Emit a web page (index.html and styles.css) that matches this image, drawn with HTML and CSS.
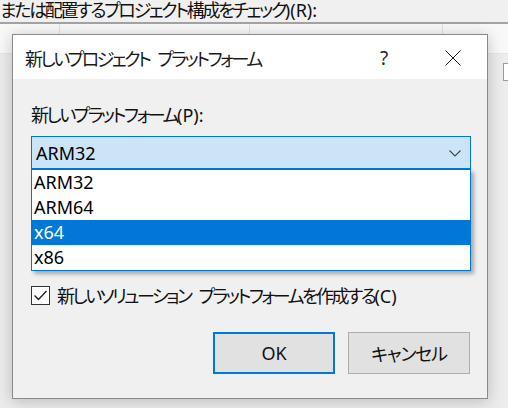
FILE: index.html
```html
<!DOCTYPE html>
<html lang="ja">
<head>
<meta charset="utf-8">
<link rel="stylesheet" href="styles.css">
<title>新しいプロジェクト プラットフォーム</title>
</head>
<body>
<div class="desktop">
  <div class="topstrip"><span class="toptext jp">または配置するプロジェクト構成をチェック<span class="lat">)(R):</span></span></div>
  <div class="gridrow">
    <div class="gcell c1"></div>
    <div class="gcell c2"></div>
    <div class="gcell c3"></div>
    <div class="gcell c4"></div>
  </div>
  <div class="bgrow"><span class="bgcheck"></span></div>
</div>

<div class="dialog">
  <div class="titlebar">
    <span class="title jp">新しいプロジェクト プラットフォーム</span>
    <span class="help">?</span>
    <svg class="close" width="16" height="16" viewBox="0 0 16 16"><path d="M0.5 0.5 L15.5 15.5 M15.5 0.5 L0.5 15.5" stroke="#1a1a1a" stroke-width="1" fill="none"/></svg>
  </div>
  <div class="body">
    <div class="label"><span class="jp">新しいプラットフォーム</span>(P):</div>
    <div class="combowrap">
      <div class="combo">
        <span class="combotext">ARM32</span>
        <svg class="chev" width="12" height="7" viewBox="0 0 12 7"><path d="M0.5 0.5 L6 6 L11.5 0.5" stroke="#444" stroke-width="1.1" fill="none"/></svg>
      </div>
      <ul class="list">
        <li class="item">ARM32</li>
        <li class="item">ARM64</li>
        <li class="item sel">x64</li>
        <li class="item">x86</li>
      </ul>
    </div>
    <label class="checkrow">
      <span class="box"><svg width="17" height="17" viewBox="0 0 17 17"><path d="M2.5 8.5 L6.5 12.5 L14.5 4" stroke="#222" stroke-width="1.4" fill="none"/></svg></span>
      <span class="checktext"><span class="jp">新しいソリューション プラットフォームを作成する</span>(C)</span>
    </label>
    <div class="buttons">
      <button class="btn ok">OK</button>
      <button class="btn cancel">キャンセル</button>
    </div>
  </div>
</div>
</body>
</html>
```

FILE: styles.css
```css
* { box-sizing: border-box; }
html, body { margin: 0; padding: 0; }
body {
  width: 508px;
  height: 408px;
  overflow: hidden;
  background: #ececec;
  font-family: "Noto Sans", "Noto Sans CJK JP", sans-serif;
  font-feature-settings: "palt";
  color: #000;
  position: relative;
}
.jp { letter-spacing: -2.5px; word-spacing: 6px; }
.lat { letter-spacing: 0; }
.desktop { display: flex; flex-direction: column; }
.topstrip {
  height: 24px;
  background: #f0f0f0;
  border-bottom: 2px solid #a3a3a3;
  white-space: nowrap;
}
.toptext {
  display: block;
  font-size: 18px;
  line-height: 20px;
  margin-left: 0;
  color: #111;
  letter-spacing: -2.3px;
}
.gridrow {
  height: 30px;
  display: flex;
  background: #f8f8f8;
  border-bottom: 1px solid #e6e6e6;
}
.gcell { border-right: 1px solid #e2e2e2; height: 100%; }
.c1 { width: 60px; }
.c2 { width: 190px; }
.c3 { width: 193px; }
.c4 { flex: 1; border-right: none; }
.bgrow {
  height: 36px;
  display: flex;
  justify-content: flex-end;
  align-items: center;
}
.bgcheck {
  width: 18px;
  height: 18px;
  border: 1px solid #9a9a9a;
  background: #fff;
  margin-right: -13px;
}

.dialog {
  position: absolute;
  left: 12px;
  top: 34px;
  width: 476px;
  height: 365px;
  border: 1px solid #8a8a8a;
  background: #f0f0f0;
  box-shadow: 0 2px 14px rgba(0,0,0,0.22);
  display: flex;
  flex-direction: column;
}
.titlebar {
  height: 44px;
  background: #fff;
  display: flex;
  align-items: center;
  padding-left: 12px;
  flex: none;
}
.title {
  font-size: 18px;
  color: #1a1a1a;
  flex: 1;
  margin-top: 2px;
}
.help {
  font-size: 19px;
  color: #222;
  width: 20px;
  margin-right: 45px;
  margin-top: 1px;
  font-family: "Noto Sans", sans-serif;
}
.close { margin-right: 26px; margin-top: 2px; }

.body {
  display: flex;
  flex-direction: column;
  padding: 25px 16px 0 18px;
}
.label {
  font-size: 18px;
  line-height: 22px;
  color: #111;
}
.combowrap {
  position: relative;
  margin-top: 10px;
  width: 440px;
}
.combo {
  height: 33px;
  border: 1px solid #0078d7;
  background: #cce4f7;
  display: flex;
  align-items: center;
  padding-left: 4px;
}
.combotext { font-size: 18px; flex: 1; color: #000; }
.chev { margin-right: 9px; margin-top: 1px; }
.list {
  position: absolute;
  left: 0;
  top: 33px;
  width: 440px;
  margin: 0;
  padding: 0;
  list-style: none;
  background: #fff;
  border: 1px solid #0078d7;
  box-shadow: 3px 3px 4px rgba(0,0,0,0.3);
}
.item {
  height: 25px;
  line-height: 25px;
  font-size: 18px;
  padding-left: 2px;
  color: #000;
}
.item.sel { background: #0078d7; color: #fff; }

.checkrow {
  display: flex;
  align-items: center;
  margin-top: 116px;
  height: 20px;
}
.box {
  width: 19px;
  height: 19px;
  border: 1px solid #333;
  background: #fff;
  display: flex;
  align-items: center;
  justify-content: center;
}
.checktext {
  font-size: 18px;
  margin-left: 7px;
  color: #111;
}
.buttons {
  display: flex;
  justify-content: flex-end;
  gap: 13px;
  margin-top: 27px;
  margin-right: 1px;
}
.btn {
  width: 122px;
  height: 42px;
  background: #e1e1e1;
  border: 1px solid #adadad;
  font-family: "Noto Sans", "Noto Sans CJK JP", sans-serif;
  font-feature-settings: "palt";
  font-size: 18px;
  color: #111;
  padding: 0;
}
.btn.cancel { letter-spacing: -1.2px; }
.btn.ok { border: 2px solid #0078d7; }
```
